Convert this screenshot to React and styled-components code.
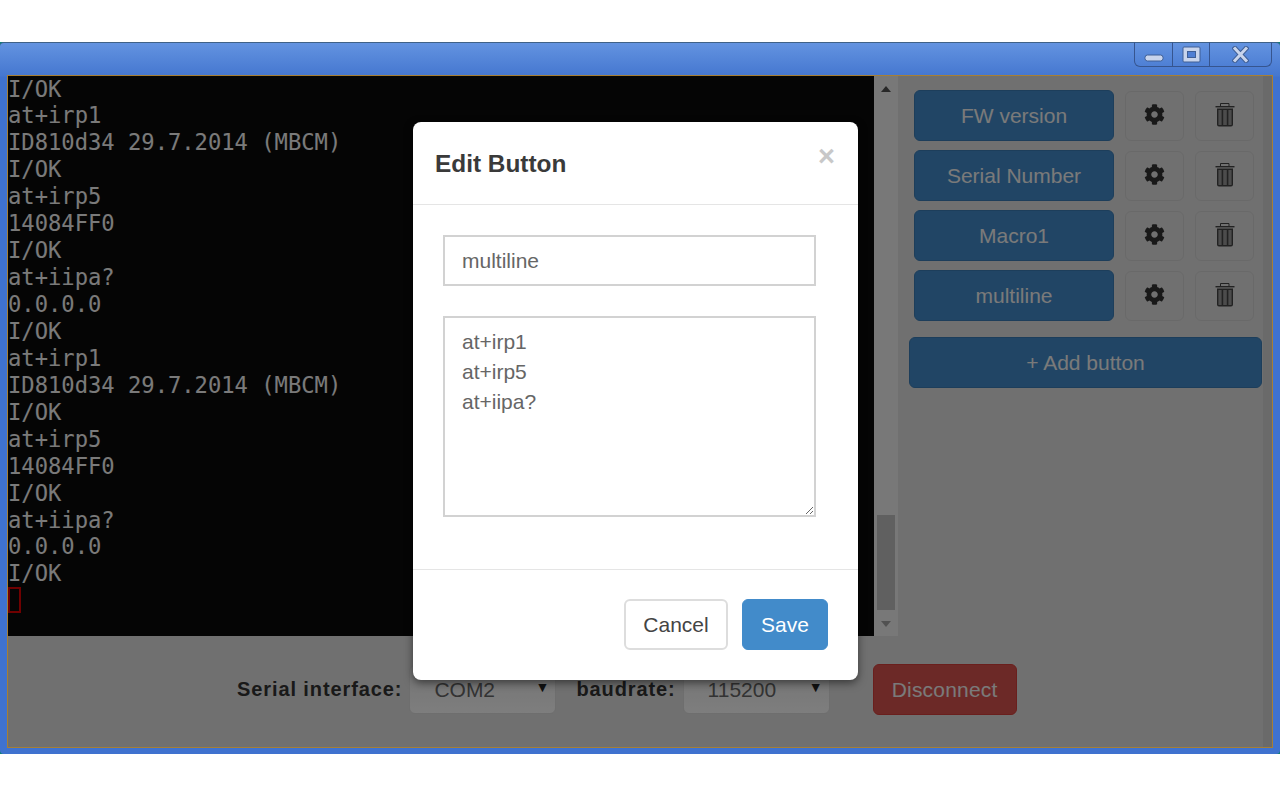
import React from 'react';
import styled, { createGlobalStyle } from 'styled-components';
import { FaCog } from 'react-icons/fa';

const GlobalStyle = createGlobalStyle`
  html, body { margin: 0; padding: 0; background: #fff; }
  body { font-family: "Liberation Sans", Arial, sans-serif; overflow: hidden; }
  * { box-sizing: border-box; }
`;

const Page = styled.div`
  height: 800px;
  padding-top: 42px;
`;
const Desktop = styled.div`
  height: 712px;
  background: #0a8078;
`;
const Window = styled.div`
  height: 100%;
  display: flex;
  flex-direction: column;
  border-radius: 4px;
  border-top: 1px solid #3f6187;
  background: linear-gradient(#6393e0 0, #4577d0 33px, #3f72cf 34px);
  padding: 0 7px 6px 7px;
`;
const TitleBar = styled.div`
  height: 32px;
  flex: none;
  display: flex;
  justify-content: flex-end;
  align-items: flex-start;
`;
const Controls = styled.div`
  display: flex;
  height: 25px;
  margin-top: -1px;
  margin-right: 1px;
  border: 1px solid #36558f;
  border-top: none;
  border-radius: 0 0 6px 6px;
`;
const ControlButton = styled.div`
  width: ${p => p.$w}px;
  display: flex;
  align-items: center;
  justify-content: center;
  & + & { border-left: 1px solid #36558f; }
`;
const Client = styled.div`
  flex: 1;
  position: relative;
  display: flex;
  border: 1px solid #a67f35;
  background: #e0e0e0;
  overflow: hidden;
`;
const Content = styled.div`
  flex: 1;
  display: flex;
  flex-direction: column;
  min-width: 0;
`;
const Gutter = styled.div`
  width: 9px;
  flex: none;
  background: #d4d4d4;
`;
const Main = styled.div`
  height: 560px;
  flex: none;
  display: flex;
`;
const Terminal = styled.div`
  width: 866px;
  flex: none;
  background: #0a0a0a;
  color: #f4f4f4;
  font: 22.15px/26.94px "DejaVu Sans Mono", monospace;
  overflow: hidden;
  white-space: pre;
`;
const TerminalLines = styled.div`
  margin-top: -0.5px;
`;
const Cursor = styled.div`
  width: 13px;
  height: 26px;
  border: 2px solid #e00000;
`;
const Scrollbar = styled.div`
  width: 24px;
  flex: none;
  background: #f1f1f1;
  display: flex;
  flex-direction: column;
  align-items: center;
  justify-content: space-between;
  padding: 10px 0 9px;
  position: relative;
`;
const Arrow = styled.div`
  width: 0;
  height: 0;
  border-left: 5.5px solid transparent;
  border-right: 5.5px solid transparent;
  ${p => (p.$up ? 'border-bottom: 6px solid #505050;' : 'border-top: 6px solid #a3a3a3;')}
`;
const ScrollThumb = styled.div`
  position: absolute;
  left: 3px;
  right: 3px;
  top: 439px;
  height: 95px;
  background: #c1c1c1;
`;
const Sidebar = styled.div`
  flex: 1;
  padding: 14px 1px 0 11px;
  display: flex;
  flex-direction: column;
`;
const MacroRow = styled.div`
  display: flex;
  gap: 11px;
  height: 51px;
  margin-bottom: 9px;
  margin-left: 5px;
`;
const PrimaryButton = styled.div`
  background: #428bca;
  border: 1px solid #3a7cb6;
  border-radius: 6px;
  color: #f4f4f4;
  font-size: 21px;
  display: flex;
  align-items: center;
  justify-content: center;
  width: ${p => p.$w}px;
  height: 51px;
`;
const IconButton = styled.div`
  width: 59px;
  height: 50px;
  margin-top: 1px;
  border: 1px solid #d3d3d3;
  border-radius: 6px;
  color: #333;
  display: flex;
  align-items: center;
  justify-content: center;
  font-size: 21px;
  padding-bottom: 4px;
`;
const AddRow = styled.div`
  margin-top: 7px;
`;
const Footer = styled.div`
  flex: 1;
  display: flex;
  align-items: center;
  padding: 0 0 4px 229px;
`;
const FieldLabel = styled.div`
  font-weight: bold;
  font-size: 20px;
  letter-spacing: 0.9px;
  color: #333;
  margin-right: ${p => p.$gap}px;
`;
const SelectBox = styled.div`
  width: ${p => p.$w}px;
  height: 49px;
  margin-right: ${p => p.$gap}px;
  border: 1px solid #dcdcdc;
  border-radius: 6px;
  background: linear-gradient(#e8e8e8, #fcfcfc);
  color: #666;
  font-size: 21px;
  display: flex;
  align-items: center;
  justify-content: space-between;
  padding: 0 6px 0 ${p => p.$pad}px;
`;
const SelectArrow = styled.span`
  font-size: 14px;
  color: #222;
  margin-bottom: 5px;
`;
const DangerButton = styled.div`
  width: 144px;
  height: 51px;
  background: #d9534f;
  border: 1px solid #d43f3a;
  border-radius: 6px;
  color: #f4f4f4;
  font-size: 21px;
  letter-spacing: 0.2px;
  display: flex;
  align-items: center;
  justify-content: center;
`;
const Backdrop = styled.div`
  position: absolute;
  inset: 0;
  background: rgba(0, 0, 0, 0.5);
`;
const Modal = styled.div`
  position: absolute;
  left: 405px;
  top: 46px;
  width: 445px;
  height: 558px;
  background: #fff;
  border-radius: 8px;
  box-shadow: 0 3px 9px rgba(0, 0, 0, 0.5);
  display: flex;
  flex-direction: column;
`;
const ModalHeader = styled.div`
  height: 83px;
  flex: none;
  border-bottom: 1px solid #e5e5e5;
  display: flex;
  justify-content: space-between;
  padding: 0 22px;
`;
const ModalTitle = styled.div`
  font-size: 24.4px;
  font-weight: bold;
  color: #3a3a3a;
  margin-top: 28px;
`;
const CloseMark = styled.div`
  font-size: 29px;
  line-height: 29px;
  font-weight: bold;
  color: #c8c8c8;
  margin: 20px 1px 0 0;
`;
const ModalBody = styled.div`
  flex: 1;
  padding: 30px 42px 0 30px;
  display: flex;
  flex-direction: column;
  gap: 30px;
`;
const NameInput = styled.input`
  width: 100%;
  height: 51px;
  border: 2px solid #d2d2d2;
  padding: 0 17px;
  font: 21px "Liberation Sans", sans-serif;
  color: #666;
  background: #fff;
  outline: none;
`;
const CommandArea = styled.textarea`
  display: block;
  width: 100%;
  height: 201px;
  border: 2px solid #d2d2d2;
  padding: 9px 17px;
  font: 21px/30px "Liberation Sans", sans-serif;
  color: #666;
  background: #fff;
  outline: none;
  overflow: hidden;
`;
const ModalFooter = styled.div`
  height: 111px;
  flex: none;
  border-top: 1px solid #e5e5e5;
  display: flex;
  justify-content: flex-end;
  gap: 14px;
  padding: 29px 30px 0 0;
`;
const ModalButton = styled.div`
  width: ${p => p.$w}px;
  height: 51px;
  border-radius: 6px;
  font-size: 21px;
  display: flex;
  align-items: center;
  justify-content: center;
  color: ${p => (p.$primary ? '#fff' : '#444')};
  background: ${p => (p.$primary ? '#428bca' : '#fff')};
  border: ${p => (p.$primary ? '1px solid #428bca' : '2px solid #ddd')};
`;

const MinimizeIcon = () => (
  <svg width="20" height="8" viewBox="0 0 20 8" style={{ marginTop: 8 }}>
    <rect x="1" y="1" width="18" height="6" rx="2.5" fill="#c8d4ec" stroke="#3f5f96" />
  </svg>
);
const MaximizeIcon = () => (
  <svg width="19" height="17" viewBox="0 0 19 17">
    <rect x="1" y="1" width="17" height="15" rx="1" fill="#c8d4ec" stroke="#3f5f96" />
    <rect x="5.5" y="5.5" width="8" height="6" fill="#4f7fd4" stroke="#3f5f96" />
  </svg>
);
const CloseIcon = () => (
  <svg width="17" height="17" viewBox="0 0 17 17">
    <path d="M3 2.5 L14 14.5 M14 2.5 L3 14.5" stroke="#3f5f96" strokeWidth="5" strokeLinecap="square" />
    <path d="M3 2.5 L14 14.5 M14 2.5 L3 14.5" stroke="#c8d4ec" strokeWidth="3" strokeLinecap="square" />
  </svg>
);
const TrashIcon = () => (
  <svg width="20" height="25" viewBox="0 0 20 25">
    <path d="M5.5 4 V1.5 H14 V4" fill="none" stroke="#444" />
    <rect x="0.5" y="4" width="19" height="1.4" fill="#444" />
    <path d="M2.7 7.2 H17.3 V22.5 Q17.3 23.8 16 23.8 H4 Q2.7 23.8 2.7 22.5 Z" fill="#999" stroke="#444" strokeWidth="1.4" />
    <rect x="6.6" y="8" width="1.6" height="15" fill="#444" />
    <rect x="11.8" y="8" width="1.6" height="15" fill="#444" />
  </svg>
);

const terminalLines = [
  'I/OK', 'at+irp1', 'ID810d34 29.7.2014 (MBCM)', 'I/OK', 'at+irp5', '14084FF0', 'I/OK', 'at+iipa?', '0.0.0.0',
  'I/OK', 'at+irp1', 'ID810d34 29.7.2014 (MBCM)', 'I/OK', 'at+irp5', '14084FF0', 'I/OK', 'at+iipa?', '0.0.0.0', 'I/OK',
];
const macros = ['FW version', 'Serial Number', 'Macro1', 'multiline'];

export default function App() {
  return (
    <Page>
      <GlobalStyle />
      <Desktop>
        <Window>
          <TitleBar>
            <Controls>
              <ControlButton $w={37}><MinimizeIcon /></ControlButton>
              <ControlButton $w={37}><MaximizeIcon /></ControlButton>
              <ControlButton $w={62}><CloseIcon /></ControlButton>
            </Controls>
          </TitleBar>
          <Client>
            <Content>
              <Main>
                <Terminal>
                  <TerminalLines>
                    {terminalLines.map((line, i) => <div key={i}>{line}</div>)}
                    <Cursor />
                  </TerminalLines>
                </Terminal>
                <Scrollbar>
                  <Arrow $up />
                  <ScrollThumb />
                  <Arrow />
                </Scrollbar>
                <Sidebar>
                  {macros.map(name => (
                    <MacroRow key={name}>
                      <PrimaryButton $w={200}>{name}</PrimaryButton>
                      <IconButton><FaCog /></IconButton>
                      <IconButton><TrashIcon /></IconButton>
                    </MacroRow>
                  ))}
                  <AddRow>
                    <PrimaryButton $w={353}>+ Add button</PrimaryButton>
                  </AddRow>
                </Sidebar>
              </Main>
              <Footer>
                <FieldLabel $gap={7}>Serial interface:</FieldLabel>
                <SelectBox $w={147} $gap={20} $pad={24}>COM2<SelectArrow>▼</SelectArrow></SelectBox>
                <FieldLabel $gap={7}>baudrate:</FieldLabel>
                <SelectBox $w={147} $gap={43} $pad={24}>115200<SelectArrow>▼</SelectArrow></SelectBox>
                <DangerButton>Disconnect</DangerButton>
              </Footer>
            </Content>
            <Gutter />
            <Backdrop />
            <Modal>
              <ModalHeader>
                <ModalTitle>Edit Button</ModalTitle>
                <CloseMark>×</CloseMark>
              </ModalHeader>
              <ModalBody>
                <NameInput readOnly value="multiline" />
                <CommandArea readOnly value={'at+irp1\nat+irp5\nat+iipa?'} />
              </ModalBody>
              <ModalFooter>
                <ModalButton $w={104}>Cancel</ModalButton>
                <ModalButton $w={86} $primary>Save</ModalButton>
              </ModalFooter>
            </Modal>
          </Client>
        </Window>
      </Desktop>
    </Page>
  );
}
